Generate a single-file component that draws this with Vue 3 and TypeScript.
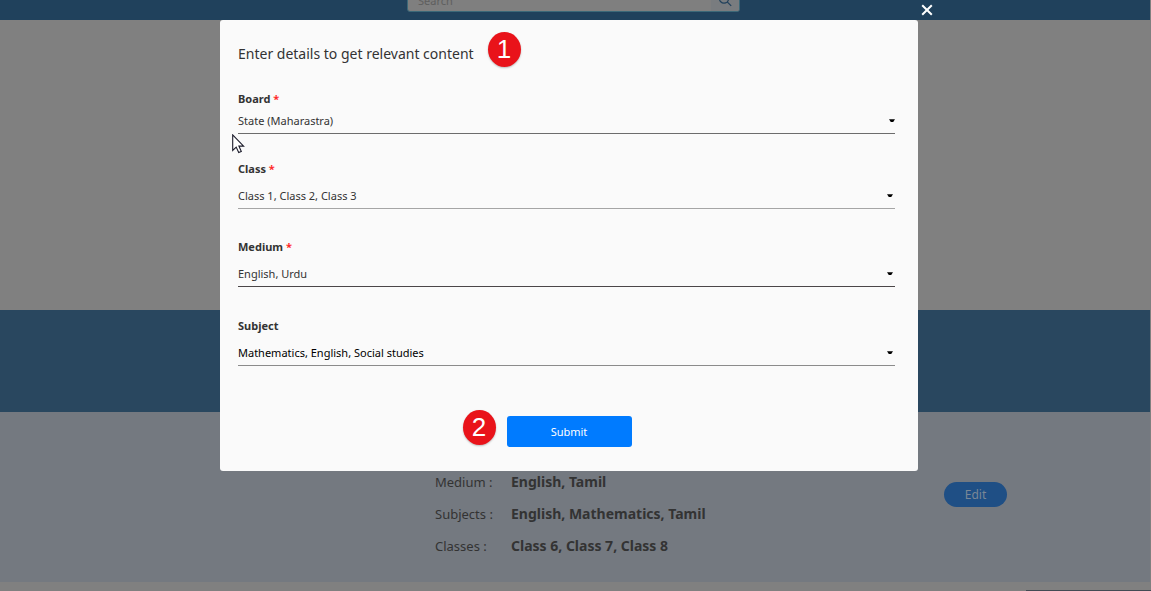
<script setup lang="ts">
import { ref } from 'vue'

interface Field {
  id: string
  label: string
  required: boolean
  tone: string
  options: string[]
}

const fields: Field[] = [
  { id: 'board', label: 'Board', required: true, tone: 'compact', options: ['State (Maharastra)'] },
  { id: 'class', label: 'Class', required: true, tone: 'light', options: ['Class 1, Class 2, Class 3'] },
  { id: 'medium', label: 'Medium', required: true, tone: 'dark', options: ['English, Urdu'] },
  { id: 'subject', label: 'Subject', required: false, tone: 'filled', options: ['Mathematics, English, Social studies'] },
]

const summary = [
  { term: 'Medium :', value: 'English, Tamil' },
  { term: 'Subjects :', value: 'English, Mathematics, Tamil' },
  { term: 'Classes :', value: 'Class 6, Class 7, Class 8' },
]

const values = ref<Record<string, string>>(
  Object.fromEntries(fields.map((f) => [f.id, f.options[0]])),
)
const query = ref('')
</script>

<template>
  <div class="page">
    <header class="topbar">
      <form class="search" role="search" @submit.prevent>
        <input v-model="query" type="text" placeholder="Search" aria-label="Search" />
        <button type="submit" aria-label="Run search">
          <svg width="14" height="14" viewBox="0 0 14 14" fill="none" stroke="#20415c" stroke-width="1.2">
            <circle cx="6" cy="5.5" r="4.6" />
            <path d="M9.2 8.8 13.2 12.8" />
          </svg>
        </button>
      </form>
    </header>
    <main class="content">
      <div class="hero"></div>
      <div class="band"></div>
      <section class="profile">
        <dl>
          <template v-for="row in summary" :key="row.term">
            <dt>{{ row.term }}</dt>
            <dd>{{ row.value }}</dd>
          </template>
        </dl>
        <button class="edit" type="button">Edit</button>
      </section>
      <div class="next-card"></div>
    </main>

    <div class="overlay">
      <div class="modal" role="dialog" aria-modal="true" aria-labelledby="modal-title">
        <button class="close" type="button" aria-label="Close">
          <svg width="12" height="12" viewBox="0 0 12 12" fill="none" stroke="#fff" stroke-width="2">
            <path d="M1.2 1.2 10.8 10.8M10.8 1.2 1.2 10.8" />
          </svg>
        </button>
        <h1 id="modal-title">
          <span class="anchor">Enter details to get relevant content<span class="badge after">1</span></span>
        </h1>
        <form @submit.prevent>
          <div v-for="f in fields" :key="f.id" class="field" :class="f.tone">
            <label :for="f.id">{{ f.label }} <span v-if="f.required" class="star">*</span></label>
            <div class="control">
              <select :id="f.id" v-model="values[f.id]">
                <option v-for="o in f.options" :key="o" :value="o">{{ o }}</option>
              </select>
              <svg width="6" height="4" viewBox="0 0 6 4" aria-hidden="true">
                <path d="M0 0.3H6L4.2 3H1.8Z" fill="#000" />
              </svg>
            </div>
          </div>
          <div class="actions">
            <span class="anchor">
              <span class="badge before">2</span>
              <button class="submit" type="submit">Submit</button>
            </span>
          </div>
        </form>
        <svg class="cursor" width="13" height="20" viewBox="0 0 13 20" aria-hidden="true">
          <path
            d="M0.7 0.9V16.4L4.2 13.1L6.7 18.6L9.3 17.4L6.9 12.1H11.6Z"
            fill="#fff"
            stroke="#1b1b2a"
            stroke-width="1.1"
          />
        </svg>
      </div>
    </div>
  </div>
</template>

<style>
body {
  margin: 0;
  background: #808080;
}
</style>

<style scoped>
.page {
  position: relative;
  min-height: 100vh;
  overflow: hidden;
  box-sizing: border-box;
  background: #808080;
  color: #333;
  font-family: "Noto Sans", "Open Sans", sans-serif;
}
button,
input,
select {
  font-family: inherit;
}
button {
  border: 0;
  padding: 0;
  cursor: pointer;
}
.topbar {
  display: flex;
  align-items: flex-end;
  justify-content: center;
  box-sizing: border-box;
  height: 20px;
  margin-right: 1px;
  padding: 0 3px 8px 0;
  background: #20415c;
}
.search {
  display: flex;
  box-sizing: border-box;
  width: 333px;
  height: 24px;
  border: 1px solid #3c6878;
  border-radius: 3px;
  overflow: hidden;
  background: #7f7f7f;
}
.search input {
  flex: 1;
  min-width: 0;
  border: 0;
  padding: 0 9px 0 10px;
  background: transparent;
  font-size: 11px;
  outline: 0;
}
.search input::placeholder {
  color: #5e5e5e;
  opacity: 1;
}
.search button {
  display: flex;
  align-items: center;
  justify-content: center;
  width: 28px;
  background: #797c7f;
}
.content {
  display: flex;
  flex-direction: column;
}
.hero {
  height: 290px;
}
.band {
  height: 102px;
  margin-right: 1px;
  background: #29475f;
}
.profile {
  display: flex;
  align-items: flex-start;
  justify-content: space-between;
  box-sizing: border-box;
  min-height: 170px;
  margin-right: 1px;
  padding: 60px 143px 20px 435px;
  background: #747980;
}
dl {
  display: grid;
  grid-template-columns: 76px auto;
  row-gap: 12px;
  margin: 0;
  line-height: 20px;
}
dt {
  font-size: 13px;
}
dd {
  margin: 0;
  font-size: 14px;
  font-weight: 700;
}
.edit {
  width: 63px;
  height: 25px;
  margin-top: 10px;
  border-radius: 13px;
  background: #1f4f85;
  color: #7a8796;
  font-size: 12px;
}
.next-card {
  align-self: flex-end;
  width: 125px;
  height: 1px;
  margin-top: 8px;
  background: #434b54;
}
.overlay {
  position: absolute;
  inset: 0;
  box-sizing: border-box;
  padding: 20px 13px 0 0;
}
.modal {
  position: relative;
  box-sizing: border-box;
  max-width: 698px;
  margin: 0 auto;
  padding: 23px 23px 24px 18px;
  border-radius: 3px;
  background: #fafafa;
}
.close {
  position: absolute;
  left: calc(100% + 3px);
  top: -16px;
  display: flex;
  background: transparent;
}
h1 {
  margin: 0 0 26px;
  font-size: 14px;
  font-weight: 400;
  line-height: 22px;
}
.anchor {
  position: relative;
  display: inline-block;
}
.badge {
  position: absolute;
  width: 33px;
  height: 35px;
  border-radius: 50%;
  background: #e9131a;
  box-shadow: 0 1px 2px rgba(0, 0, 0, 0.25);
  color: #fff;
  font-family: "Liberation Sans", Arial, sans-serif;
  font-size: 26px;
  line-height: 35px;
  text-align: center;
}
.after {
  left: calc(100% + 14px);
  top: -11px;
}
.before {
  right: calc(100% + 11px);
  top: -6px;
}
.field {
  display: flex;
  flex-direction: column;
  gap: 6px;
  margin-bottom: 30px;
}
.field.compact {
  gap: 1px;
  margin-bottom: 27px;
}
.field.dark {
  margin-bottom: 31px;
}
.field label {
  font-size: 11px;
  font-weight: 700;
  line-height: 16px;
}
.star {
  color: #ff2a2a;
}
.control {
  display: grid;
  align-items: center;
  justify-items: end;
}
.control > * {
  grid-area: 1 / 1;
}
.control svg {
  margin-right: 2px;
  pointer-events: none;
}
.compact .control svg {
  margin-right: 0;
}
select {
  appearance: none;
  box-sizing: border-box;
  width: 100%;
  height: 26px;
  margin: 0;
  padding: 0;
  border: 0;
  border-bottom: 1px solid #6c6c6c;
  border-radius: 0;
  background: transparent;
  color: #333;
  font-size: 11px;
  outline: 0;
}
.light select {
  border-color: #a5a5a5;
}
.dark select {
  border-color: #4b4648;
}
.filled select {
  border-color: #8b8b8b;
  color: #000;
}
.actions {
  display: flex;
  justify-content: center;
  margin-top: 50px;
  padding-left: 5px;
}
.submit {
  display: block;
  width: 125px;
  height: 31px;
  border-radius: 3px;
  background: #007bff;
  color: #fff;
  font-size: 11px;
}
.cursor {
  position: absolute;
  left: 12px;
  top: 114px;
}
</style>
